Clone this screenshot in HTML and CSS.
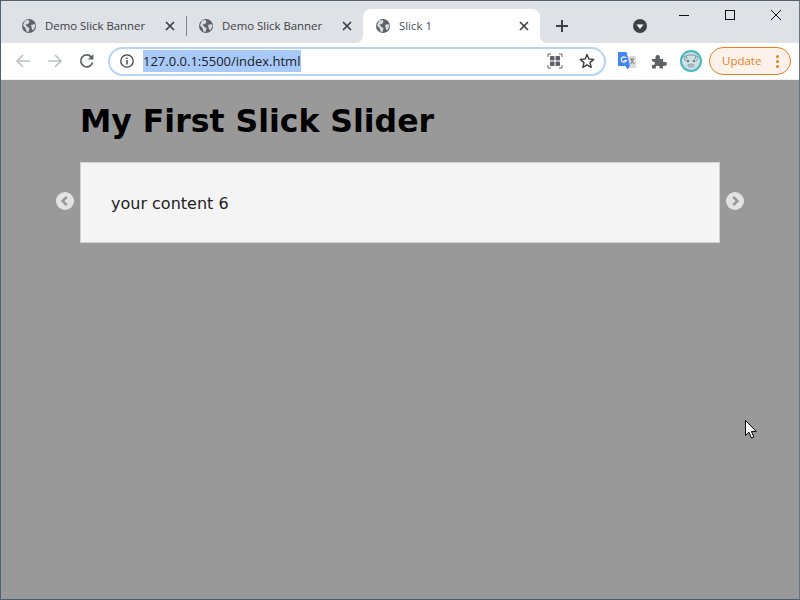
FILE: index.html
```html
<!DOCTYPE html>
<html lang="en">
<head>
<meta charset="utf-8">
<title>Slick 1</title>
<link rel="stylesheet" href="styles.css">
</head>
<body>
<svg class="defs" width="0" height="0">
  <symbol id="globe" viewBox="0 0 14 14">
    <circle cx="7" cy="7" r="7" fill="#5f6368"/>
    <path d="M3 1.5 L6.5 1 L7.5 3 L6 5 L3.5 5.5 L5.5 8 L7.5 9 L6.5 13 L4.5 12.5 L3.5 9 L1 6.5 Z M9 6 L12.5 5 L13.4 7 L11.5 11 L10 10.5 L9.5 8 Z" fill="#dee1e6" fill-opacity=".95"/>
  </symbol>
  <symbol id="close" viewBox="0 0 10 10">
    <path d="M1 1 L9 9 M9 1 L1 9" stroke="#3c4043" stroke-width="1.7" fill="none"/>
  </symbol>
</svg>
<div class="window">
  <header class="tabstrip">
    <div class="tab">
      <svg class="favicon"><use href="#globe"/></svg>
      <span class="tab-title">Demo Slick Banner</span>
      <svg class="tab-close"><use href="#close"/></svg>
    </div>
    <div class="tab tab-divided">
      <svg class="favicon"><use href="#globe"/></svg>
      <span class="tab-title">Demo Slick Banner</span>
      <svg class="tab-close"><use href="#close"/></svg>
    </div>
    <div class="tab tab-active">
      <svg class="favicon"><use href="#globe"/></svg>
      <span class="tab-title tab-title-active">Slick 1</span>
      <svg class="tab-close"><use href="#close"/></svg>
    </div>
    <svg class="newtab" viewBox="0 0 12 12"><path d="M6 0 V12 M0 6 H12" stroke="#3c4043" stroke-width="2"/></svg>
    <svg class="tabsearch" viewBox="0 0 14 14"><circle cx="7" cy="7" r="7" fill="#3c4043"/><path d="M3.5 5.5 H10.5 L7 10 Z" fill="#fff"/></svg>
    <div class="winctl">
      <svg class="winbtn" viewBox="0 0 10 10"><path d="M0 5.5 H10" stroke="#111" stroke-width="1"/></svg>
      <svg class="winbtn" viewBox="0 0 10 10"><rect x=".5" y=".5" width="9" height="9" fill="none" stroke="#111"/></svg>
      <svg class="winbtn" viewBox="0 0 10 10"><path d="M0 0 L10 10 M10 0 L0 10" stroke="#111" stroke-width="1" fill="none"/></svg>
    </div>
  </header>
  <nav class="toolbar">
    <svg class="navbtn" viewBox="0 0 16 16"><path d="M15 8 H2 M8 2 L2 8 L8 14" fill="none" stroke="#bdc1c6" stroke-width="1.7"/></svg>
    <svg class="navbtn" viewBox="0 0 16 16"><path d="M1 8 H14 M8 2 L14 8 L8 14" fill="none" stroke="#bdc1c6" stroke-width="1.7"/></svg>
    <svg class="navbtn" viewBox="0 0 16 16"><path d="M13.6 9.5 A6 6 0 1 1 12.2 3.8" fill="none" stroke="#5f6368" stroke-width="1.8"/><path d="M14.4 1 V6.6 H8.8 Z" fill="#5f6368"/></svg>
    <div class="omnibox">
      <svg class="infoicon" viewBox="0 0 14 14"><circle cx="7" cy="7" r="6.2" fill="none" stroke="#3c4043" stroke-width="1.3"/><path d="M7 6 V10.5 M7 3.4 V4.9" stroke="#3c4043" stroke-width="1.4"/></svg>
      <span class="url">127.0.0.1:5500/index.html</span>
      <svg class="omni-icon" viewBox="0 0 16 16"><path d="M1 4 V1 H4 M12 1 H15 V4 M15 12 V15 H12 M4 15 H1 V12" fill="none" stroke="#5f6368" stroke-width="1"/><rect x="3" y="3" width="4.5" height="4.5" rx=".8" fill="#5f6368"/><rect x="8.5" y="3" width="4.5" height="4.5" rx=".8" fill="#5f6368"/><rect x="3" y="8.5" width="4.5" height="4.5" rx=".8" fill="#5f6368"/><rect x="8.5" y="8.5" width="4.5" height="4.5" rx=".8" fill="#5f6368"/></svg>
      <svg class="omni-icon omni-star" viewBox="0 0 16 16"><path d="M8 1.6 L9.9 6 L14.7 6.4 L11 9.6 L12.2 14.3 L8 11.8 L3.8 14.3 L5 9.6 L1.3 6.4 L6.1 6 Z" fill="none" stroke="#3c4043" stroke-width="1.4" stroke-linejoin="round"/></svg>
    </div>
    <svg class="translate" viewBox="0 0 18 18"><rect x="8" y="4" width="10" height="12" fill="#dadce0"/><path d="M12 7 H16 M14 6.5 V8 M12.5 12 L15.5 8 M13 8 L16 12" stroke="#5f6368" stroke-width=".8" fill="none"/><path d="M0 0 H8.5 L12 14 L9.5 17.5 L7.5 14 H0 Z" fill="#4285f4"/><path d="M8 6 A2.6 2.6 0 1 0 8.3 8.5 H5.8" fill="none" stroke="#fff" stroke-width="1.2"/></svg>
    <svg class="puzzle" viewBox="0 0 16 16"><path d="M1 6 H4.5 C4 3.5 5 2 6.7 2 C8.4 2 9.4 3.5 8.9 6 H12 V8.8 C14.5 8.3 16 9.2 16 10.8 C16 12.4 14.5 13.4 12 12.9 V15.5 H8.5 C9 13.5 8 12.8 6.7 12.8 C5.4 12.8 4.4 13.5 4.9 15.5 H1 V12 C3 12.4 3.8 11.4 3.8 10.2 C3.8 9 3 8.2 1 8.6 Z" fill="#5f6368"/></svg>
    <svg class="avatar" viewBox="0 0 22 22"><circle cx="11" cy="11" r="10" fill="#cfe0e3" stroke="#45b8c4" stroke-width="2"/><path d="M3.5 7.5 C7 4 15 4 18.5 7.5 M3.5 7.5 L6 11 M18.5 7.5 L16 11 M6 6 L7 9 M16 6 L15 9" fill="none" stroke="#7f9396" stroke-width="1"/><circle cx="8" cy="11" r="1.3" fill="#6d8083"/><circle cx="14" cy="11" r="1.3" fill="#6d8083"/><path d="M7.5 15.5 C9 13.5 13 13.5 14.5 15.5 C13 17.5 9 17.5 7.5 15.5 Z" fill="#b9c9cb" stroke="#7f9396" stroke-width=".7"/></svg>
    <div class="update">
      <span class="update-label">Update</span>
      <span class="update-dots"><i class="dot"></i><i class="dot"></i><i class="dot"></i></span>
    </div>
  </nav>
  <main class="page">
    <h1 class="heading">My First Slick Slider</h1>
    <section class="slider">
      <button class="arrow arrow-prev" aria-label="Previous"><svg viewBox="0 0 18 18"><circle cx="9" cy="9" r="9" fill="#e3e3e3"/><path d="M10.8 4.8 L6.6 9 L10.8 13.2" fill="none" stroke="#999" stroke-width="2.6"/></svg></button>
      <div class="slide">your content 6</div>
      <button class="arrow arrow-next" aria-label="Next"><svg viewBox="0 0 18 18"><circle cx="9" cy="9" r="9" fill="#e3e3e3"/><path d="M7.2 4.8 L11.4 9 L7.2 13.2" fill="none" stroke="#999" stroke-width="2.6"/></svg></button>
    </section>
    <svg class="cursor" viewBox="0 0 12 20"><path d="M.5 .5 V15.5 L4 12.2 L6.4 18 L8.8 17 L6.4 11.4 H11.2 Z" fill="#fff" stroke="#000" stroke-width="1"/></svg>
  </main>
</div>
</body>
</html>
```
FILE: styles.css
```css
* { box-sizing: border-box; }
html, body { margin: 0; height: 100%; }
body { width: 800px; height: 600px; overflow: hidden; background: #999; }
.defs { position: absolute; }
.window {
  width: 800px; height: 600px; display: flex; flex-direction: column;
  border: 1px solid #4d6175; border-top-color: #55606b; border-right-color: #6a7580;
}
.tabstrip {
  height: 42px; flex: none; background: #dee1e6; display: flex; align-items: flex-end;
  padding-left: 7px; font-family: "Open Sans", "Liberation Sans", sans-serif;
}
.tab {
  position: relative; width: 177px; height: 34px; display: flex; align-items: center;
  padding: 0 10px 0 14px; flex: none; border-radius: 8px 8px 0 0;
}
.tab-divided::before {
  content: ""; position: absolute; left: 1px; top: 7px; height: 20px; width: 1px; background: #7f868c;
}
.tab-active { background: #fff; margin-left: 1px; padding: 0 11px 0 13px; }
.tab-active::before, .tab-active::after {
  content: ""; position: absolute; bottom: 0; width: 8px; height: 8px; background: #fff;
}
.tab-active::before { left: -8px; -webkit-mask: radial-gradient(circle at 0 0, transparent 8px, #000 8.5px); mask: radial-gradient(circle at 0 0, transparent 8px, #000 8.5px); }
.tab-active::after { right: -8px; -webkit-mask: radial-gradient(circle at 100% 0, transparent 8px, #000 8.5px); mask: radial-gradient(circle at 100% 0, transparent 8px, #000 8.5px); }
.favicon { width: 14px; height: 14px; flex: none; }
.tab-title { margin-left: 9px; padding-bottom: 2px; font-size: 11.4px; color: #3c4043; flex: 1; white-space: nowrap; }
.tab-title-active { color: #45525e; }
.tab-close { width: 10px; height: 10px; flex: none; }
.newtab { width: 12px; height: 12px; margin: 0 0 11px 16px; flex: none; }
.tabsearch { width: 14px; height: 14px; margin: 0 0 10px 65px; flex: none; }
.winctl { display: flex; align-self: flex-start; margin: 9px 0 0 32px; gap: 36px; }
.winbtn { width: 10px; height: 10px; flex: none; }
.toolbar {
  height: 37px; flex: none; background: #fff; display: flex; align-items: center; padding: 0 9px 0 14px;
  border-bottom: 1px solid #f0f0f0;
  font-family: "Open Sans", "Liberation Sans", sans-serif;
}
.navbtn { width: 16px; height: 16px; flex: none; margin-right: 16px; }
.omnibox {
  width: 498px; height: 29px; margin-left: -3px; flex: none; border: 2px solid #b6d4f7; border-radius: 15px;
  display: flex; align-items: center; padding: 0 9px 0 10px; background: #fff;
}
.infoicon { width: 14px; height: 14px; flex: none; margin-right: 9px; }
.url {
  font-size: 13px; line-height: 22px; height: 22px; width: 158px; white-space: nowrap;
  background: #a9c9f9; color: #202124; flex: none;
}
.omni-icon { width: 16px; height: 16px; flex: none; margin-left: auto; }
.omni-star { margin-left: 16px; }
.translate { width: 18px; height: 18px; margin-left: 12px; flex: none; }
.puzzle { width: 16px; height: 16px; margin-left: 15px; flex: none; }
.avatar { width: 22px; height: 22px; margin-left: 13px; flex: none; }
.update {
  width: 82px; height: 28px; margin-left: 7px; flex: none; display: flex; align-items: center;
  border: 1px solid #e8811a; border-radius: 14px; background: #fcf2eb; padding: 0 11px 0 12px;
}
.update-label { padding-bottom: 1px; font-size: 11.5px; color: #e8811a; flex: 1; }
.update-dots { display: flex; flex-direction: column; gap: 2px; }
.dot { display: block; width: 3px; height: 3px; border-radius: 50%; background: #e8811a; }
.page {
  position: relative; flex: 1; background: #999; padding: 0 79px;
  font-family: "DejaVu Sans", Verdana, sans-serif;
}
.heading {
  margin: 0; padding-top: 22px; font-size: 31.5px; line-height: 38px; font-weight: bold; color: #000; white-space: nowrap;
}
.slider { position: relative; margin-top: 22px; }
.slide {
  height: 81px; width: 640px; background: #f4f4f4; border: 1px solid #d1d1d1; padding: 31px 30px 0; font-size: 16px;
  line-height: 20px; color: #222;
}
.arrow {
  position: absolute; top: 30px; width: 18px; height: 18px; padding: 0; border: 0; background: none;
}
.arrow svg { display: block; width: 18px; height: 18px; }
.arrow-prev { left: -24px; }
.arrow-next { right: -24px; }
.cursor { position: absolute; left: 744px; top: 340px; width: 12px; height: 20px; }
```
